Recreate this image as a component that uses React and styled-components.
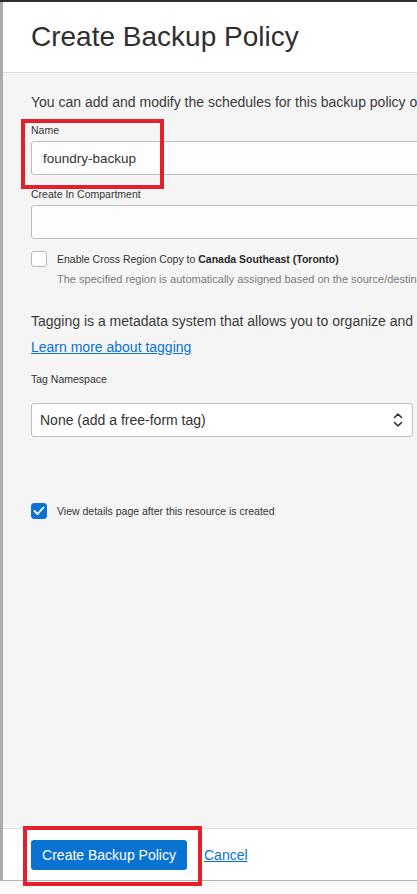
import React from 'react';
import styled, { createGlobalStyle } from 'styled-components';

const GlobalStyle = createGlobalStyle`
  html, body {
    margin: 0;
    padding: 0;
    overflow: hidden;
    background: #fafafa;
  }
  body {
    font-family: "Liberation Sans", Arial, sans-serif;
    color: #333;
  }
`;

const Screen = styled.div`
  width: 417px;
  height: 894px;
  display: flex;
  flex-direction: column;
  overflow: hidden;
  position: relative;
`;

const TopBar = styled.div`
  height: 2px;
  background: #2e2e2e;
  flex-shrink: 0;
`;

const Main = styled.div`
  flex: 1;
  display: flex;
  min-height: 0;
`;

const Strip = styled.div`
  width: 3px;
  flex-shrink: 0;
  background: #ababab;
`;

const Panel = styled.div`
  flex: 1;
  display: flex;
  flex-direction: column;
  min-width: 0;
`;

const Header = styled.header`
  height: 70px;
  flex-shrink: 0;
  display: flex;
  align-items: center;
  padding-left: 28px;
  background: #fff;
  border-bottom: 1px solid #dcdcdc;
`;

const Title = styled.h1`
  margin: 0;
  font-size: 28px;
  font-weight: 400;
  color: #2f2f2f;
  white-space: nowrap;
`;

const Body = styled.div`
  flex: 1;
  background: #f5f5f5;
  padding: 19px 0 0 28px;
  display: flex;
  flex-direction: column;
  align-items: flex-start;
`;

const Paragraph = styled.p`
  margin: ${p => p.$mt || 0}px 0 0;
  font-size: 14px;
  line-height: 20px;
  color: #3a3a3a;
  white-space: nowrap;
`;

const Field = styled.div`
  position: relative;
  margin-top: ${p => p.$mt || 0}px;
`;

const Label = styled.label`
  display: block;
  font-size: 10.5px;
  line-height: 14px;
  color: #333;
  white-space: nowrap;
`;

const TextInput = styled.div`
  margin-top: 4px;
  width: 600px;
  height: 34px;
  box-sizing: border-box;
  border: 1px solid #bdbdbd;
  border-radius: 3px;
  background: #fdfdfd;
  display: flex;
  align-items: center;
  padding-left: 11px;
  font-size: 13.5px;
  color: #333;
`;

const Highlight = styled.div`
  position: absolute;
  top: ${p => p.$top}px;
  left: ${p => p.$left}px;
  width: ${p => p.$w}px;
  height: ${p => p.$h}px;
  box-sizing: border-box;
  border: 4px solid #e3202b;
  pointer-events: none;
  z-index: 5;
`;

const CheckRow = styled.div`
  display: flex;
  align-items: center;
  gap: 10px;
  margin-top: ${p => p.$mt || 0}px;
`;

const Box = styled.span`
  width: 16px;
  height: 16px;
  box-sizing: border-box;
  border-radius: 3px;
  border: 1px solid ${p => (p.$checked ? '#0a72d1' : '#b8b8b8')};
  background: ${p => (p.$checked ? '#0a72d1' : '#fff')};
  display: flex;
  align-items: center;
  justify-content: center;
  flex-shrink: 0;
`;

const CheckText = styled.span`
  font-size: 10.5px;
  line-height: 15px;
  color: #333;
  white-space: nowrap;

  b {
    font-weight: 700;
    color: #2a2a2a;
  }
`;

const Help = styled.div`
  margin: 5px 0 0 26px;
  font-size: 11px;
  line-height: 14px;
  color: #7a7a7a;
  white-space: nowrap;
`;

const Link = styled.a`
  display: block;
  margin-top: ${p => p.$mt || 0}px;
  font-size: 14px;
  line-height: 20px;
  color: #0a72d1;
  text-decoration: underline;
  cursor: pointer;
`;

const Select = styled.div`
  margin-top: 17px;
  width: 382px;
  height: 34px;
  box-sizing: border-box;
  border: 1px solid #c2c2c2;
  border-radius: 3px;
  background: #fff;
  display: flex;
  align-items: center;
  justify-content: space-between;
  padding: 0 9px 0 8px;
  font-size: 14px;
  color: #333;
`;

const Footer = styled.footer`
  height: 52px;
  flex-shrink: 0;
  box-sizing: border-box;
  border-top: 1px solid #dedede;
  background: #fff;
  display: flex;
  align-items: flex-start;
  padding: 11px 0 0 28px;
  gap: 17px;
`;

const ButtonWrap = styled.div`
  position: relative;
`;

const Primary = styled.button`
  height: 30px;
  width: 156px;
  border: none;
  border-radius: 3px;
  background: #0a72d1;
  color: #fff;
  font-family: "Liberation Sans", Arial, sans-serif;
  font-size: 14px;
  padding: 0;
  cursor: pointer;
`;

const Cancel = styled.a`
  margin-top: 7px;
  font-size: 14px;
  color: #0a72d1;
  text-decoration: underline;
  cursor: pointer;
`;

const Bottom = styled.div`
  height: 13px;
  flex-shrink: 0;
  border-top: 1px solid #b5b5b5;
  background: #fafafa;
`;

const UpDown = () => (
  <svg width="10" height="16" viewBox="0 0 10 16" fill="none" stroke="#333" strokeWidth="1.6" strokeLinecap="round" strokeLinejoin="round">
    <polyline points="1.5,5.5 5,2 8.5,5.5" />
    <polyline points="1.5,10.5 5,14 8.5,10.5" />
  </svg>
);

const Tick = () => (
  <svg width="12" height="10" viewBox="0 0 12 10" fill="none" stroke="#fff" strokeWidth="1.8" strokeLinecap="round" strokeLinejoin="round">
    <polyline points="1.5,5 4.5,8 10.5,1.5" />
  </svg>
);

export default function App() {
  return (
    <Screen>
      <GlobalStyle />
      <TopBar />
      <Main>
        <Strip />
        <Panel>
          <Header>
            <Title>Create Backup Policy</Title>
          </Header>
          <Body>
            <Paragraph>
              You can add and modify the schedules for this backup policy once it is created.
            </Paragraph>

            <Field $mt={11}>
              <Highlight $top={-4} $left={-10} $w={143} $h={70} />
              <Label>Name</Label>
              <TextInput>foundry-backup</TextInput>
            </Field>

            <Field $mt={12}>
              <Label>Create In Compartment</Label>
              <TextInput />
            </Field>

            <CheckRow $mt={12}>
              <Box />
              <CheckText>
                Enable Cross Region Copy to <b>Canada Southeast (Toronto)</b>
              </CheckText>
            </CheckRow>
            <Help>
              The specified region is automatically assigned based on the source/destination region pairing.
            </Help>

            <Paragraph $mt={25}>
              Tagging is a metadata system that allows you to organize and track resources within your tenancy.
            </Paragraph>
            <Link $mt={6}>Learn more about tagging</Link>

            <Field $mt={15}>
              <Label>Tag Namespace</Label>
            </Field>
            <Select>
              <span>None (add a free-form tag)</span>
              <UpDown />
            </Select>

            <CheckRow $mt={66}>
              <Box $checked>
                <Tick />
              </Box>
              <CheckText>View details page after this resource is created</CheckText>
            </CheckRow>
          </Body>
          <Footer>
            <ButtonWrap>
              <Highlight $top={-14} $left={-8} $w={179} $h={60} />
              <Primary>Create Backup Policy</Primary>
            </ButtonWrap>
            <Cancel>Cancel</Cancel>
          </Footer>
        </Panel>
      </Main>
      <Bottom />
    </Screen>
  );
}
